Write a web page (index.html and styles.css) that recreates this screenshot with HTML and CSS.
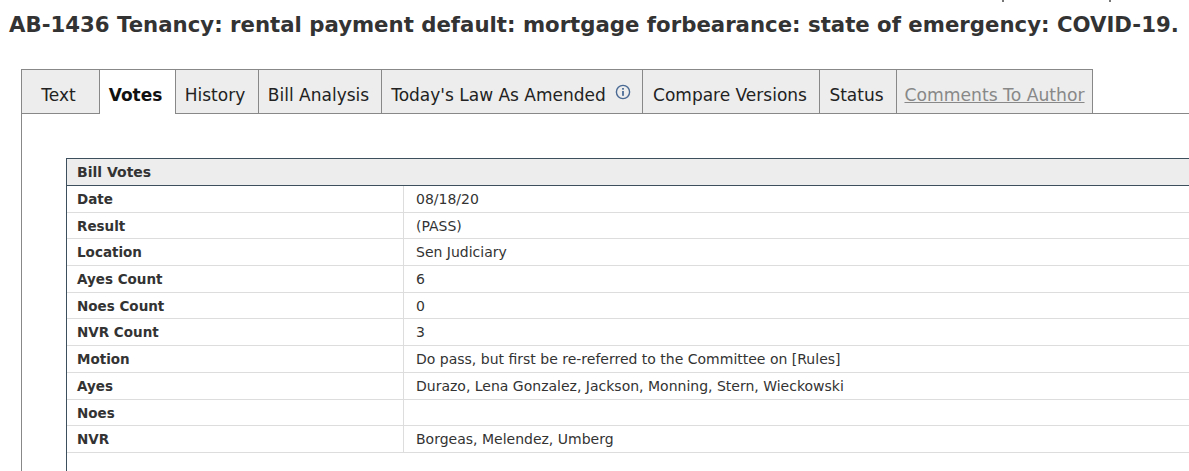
FILE: index.html
```html
<!DOCTYPE html>
<html lang="en">
<head>
  <meta charset="UTF-8">
  <title>AB-1436</title>
  <link rel="stylesheet" href="styles.css">
</head>
<body>
  <span class="clip-mark clip-left"></span>
  <span class="clip-mark clip-right"></span>

  <h1 class="bill-title">AB-1436 Tenancy: rental payment default: mortgage forbearance: state of emergency: COVID-19.</h1>

  <div class="tabs">
    <a class="tab tab-text">Text</a>
    <a class="tab tab-votes active">Votes</a>
    <a class="tab tab-history">History</a>
    <a class="tab tab-analysis">Bill Analysis</a>
    <a class="tab tab-law">Today's Law As Amended
      <svg class="info-icon" viewBox="0 0 16 16" width="16" height="16">
        <circle cx="8" cy="8" r="6.6" fill="none" stroke="#4a6a94" stroke-width="1.4"/>
        <rect x="7.1" y="7" width="1.8" height="4.8" fill="#4a6a94"/>
        <rect x="7.1" y="4" width="1.8" height="1.7" fill="#4a6a94"/>
      </svg>
    </a>
    <a class="tab tab-compare">Compare Versions</a>
    <a class="tab tab-status">Status</a>
    <a class="tab tab-comments disabled">Comments To Author</a>
  </div>

  <div class="tab-panel">
    <div class="votes-table">
      <div class="votes-header">Bill Votes</div>
      <div class="vote-row"><div class="vote-label">Date</div><div class="vote-value">08/18/20</div></div>
      <div class="vote-row"><div class="vote-label">Result</div><div class="vote-value">(PASS)</div></div>
      <div class="vote-row"><div class="vote-label">Location</div><div class="vote-value">Sen Judiciary</div></div>
      <div class="vote-row"><div class="vote-label">Ayes Count</div><div class="vote-value">6</div></div>
      <div class="vote-row"><div class="vote-label">Noes Count</div><div class="vote-value">0</div></div>
      <div class="vote-row"><div class="vote-label">NVR Count</div><div class="vote-value">3</div></div>
      <div class="vote-row"><div class="vote-label">Motion</div><div class="vote-value">Do pass, but first be re-referred to the Committee on [Rules]</div></div>
      <div class="vote-row"><div class="vote-label">Ayes</div><div class="vote-value">Durazo, Lena Gonzalez, Jackson, Monning, Stern, Wieckowski</div></div>
      <div class="vote-row"><div class="vote-label">Noes</div><div class="vote-value"></div></div>
      <div class="vote-row"><div class="vote-label">NVR</div><div class="vote-value">Borgeas, Melendez, Umberg</div></div>
    </div>
  </div>
</body>
</html>
```

FILE: styles.css
```css
html, body {
  height: 471px;
  overflow: hidden;
}

body {
  margin: 0;
  background: #fff;
  color: #333;
  font-family: "DejaVu Sans", Verdana, sans-serif;
}

/* tips of a line cut off by the top of the frame */
.clip-mark {
  position: absolute;
  top: 0;
  width: 2px;
  height: 2px;
  background: #777;
}

.clip-left { left: 1002px; }
.clip-right { left: 1109px; }

.bill-title {
  margin: 0;
  padding: 13px 0 0 9px;
  height: 69px;
  box-sizing: border-box;
  font-size: 21.25px;
  line-height: 24px;
  font-weight: bold;
  white-space: nowrap;
}

.tabs {
  display: flex;
  margin-left: 21px;
  height: 45px;
  box-sizing: border-box;
}

.tab {
  display: flex;
  align-items: center;
  justify-content: center;
  box-sizing: border-box;
  height: 44px;
  padding: 6px 2px 0 0;
  background: #ededed;
  border-top: 1px solid #888;
  border-right: 1px solid #888;
  color: #222;
  font-size: 17px;
  white-space: nowrap;
}

.tab-text { width: 79px; padding-right: 4px; border-left: 1px solid #888; }
.tab-votes { width: 76px; padding-right: 4px; }
.tab-history { width: 83px; padding-right: 4px; }
.tab-analysis { width: 123px; padding-right: 3px; }
.tab-law { width: 261px; }
.tab-compare { width: 177px; }
.tab-status { width: 77px; padding-right: 3px; }
.tab-comments { width: 196px; padding-right: 0; }

.tab.active {
  height: 45px;
  background: #fff;
  color: #111;
  font-weight: bold;
  position: relative;
  z-index: 1;
}

.tab.disabled {
  color: #888;
  font-size: 17.2px;
  text-decoration: underline;
}

.info-icon {
  margin: -6px 0 0 9px;
}

.tab-panel {
  margin: -1px 0 0 21px;
  padding: 44px 0 0 44px;
  border-top: 1px solid #888;
  border-left: 1px solid #888;
  height: 358px;
  box-sizing: border-box;
}

.votes-table {
  height: 313px;
  border-top: 1px solid #3d4f5c;
  border-left: 1px solid #3d4f5c;
  font-size: 14px;
}

.votes-header {
  height: 26px;
  line-height: 26px;
  padding-left: 10px;
  background: #ededed;
  border-bottom: 1px solid #3d4f5c;
  font-size: 14px;
  font-weight: bold;
}

.vote-row {
  display: flex;
  height: 26.7px;
  box-sizing: border-box;
  border-bottom: 1px solid #ddd;
  line-height: 27px;
}

.vote-label {
  width: 326px;
  padding-left: 10px;
  font-size: 13.5px;
  font-weight: bold;
  border-right: 1px solid #ddd;
}

.vote-value {
  padding-left: 12px;
}
```
